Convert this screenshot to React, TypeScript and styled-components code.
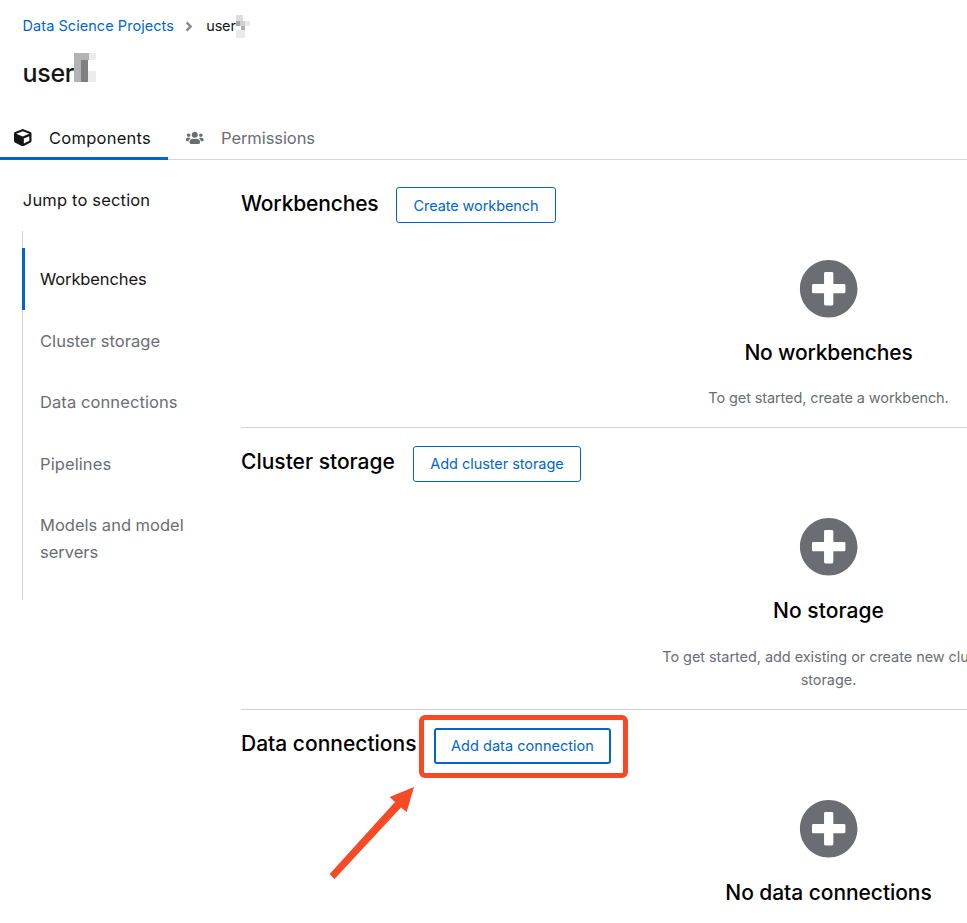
import React from "react";
import styled, { createGlobalStyle } from "styled-components";
import { FaAngleRight, FaCube, FaPlusCircle, FaUsers } from "react-icons/fa";

const blue = "#0066cc";
const gray = "#6a6e73";
const line = "#d2d2d2";
const marker = "#f64a27";

const GlobalStyle = createGlobalStyle`
  body { margin: 0; background: #fff; }
  *, *::before, *::after { box-sizing: border-box; }
  h1, h2, h3, p, ul { margin: 0; padding: 0; }
`;

const Page = styled.div`
  width: 967px;
  height: 923px;
  overflow: hidden;
  background: #fff;
  color: #151515;
  font-family: "Inter", "Open Sans", sans-serif;
`;

const PageHeader = styled.header`
  display: flow-root;
`;

const Breadcrumb = styled.nav`
  display: flex;
  align-items: center;
  height: 24px;
  margin-top: 14px;
  padding-left: 22.6px;
  font-size: 14.5px;
  line-height: 24px;
`;

const Crumb = styled.a`
  color: ${blue};
  letter-spacing: 0.05px;
`;

const CurrentCrumb = styled.span`
  letter-spacing: -0.2px;
`;

const Separator = styled(FaAngleRight)`
  width: 10px;
  height: 15px;
  margin: 0 12.4px 0 10px;
  color: #85888c;
`;

const Title = styled.h1`
  display: flex;
  align-items: flex-start;
  height: 40px;
  margin-top: 14px;
  padding-left: 22.6px;
  font-size: 25px;
  font-weight: 500;
  line-height: 43px;
  letter-spacing: -0.35px;
`;

const SmallMask = styled.svg`
  width: 14px;
  height: 23px;
`;

const LargeMask = styled.svg`
  width: 22px;
  height: 29px;
  margin-top: 1px;
`;

const Tabs = styled.div`
  display: flex;
  height: 45px;
  margin-top: 23px;
  box-shadow: inset 0 -1px ${line};
`;

const Tab = styled.div<{ $active?: boolean; $width: number; $ls: number }>`
  display: flex;
  align-items: center;
  gap: 17.5px;
  width: ${(p) => p.$width}px;
  padding: ${(p) => (p.$active ? "3px 0 0 14px" : "3px 0 0 18px")};
  border-bottom: ${(p) => (p.$active ? `3px solid ${blue}` : "3px solid transparent")};
  color: ${(p) => (p.$active ? "#151515" : gray)};
  font-size: 16.5px;
  letter-spacing: ${(p) => p.$ls}px;
  white-space: nowrap;

  svg { width: 17.5px; height: 17.5px; flex: none; }
`;

const Content = styled.div`
  display: flex;
`;

const Sidebar = styled.aside`
  flex: none;
  width: 241px;
  padding: 26.5px 0 0 22px;
  font-size: 16.5px;
  line-height: 26.6px;
`;

const SidebarTitle = styled.div`
  margin-bottom: 17.9px;
  padding-left: 0.8px;
  letter-spacing: 0.17px;
`;

const JumpList = styled.ul`
  list-style: none;
  width: 190px;
  height: 369px;
  padding-top: 17px;
  box-shadow: inset 1px 0 ${line};
`;

const JumpItem = styled.li<{ $active?: boolean; $ls: number }>`
  padding: 17.95px 0 17.05px 18px;
  box-shadow: ${(p) => (p.$active ? `inset 3px 0 ${blue}` : "none")};
  color: ${(p) => (p.$active ? "#151515" : gray)};
  letter-spacing: ${(p) => p.$ls}px;
`;

const Main = styled.main`
  flex: none;
  width: 1175px;
  padding-top: 9px;
`;

const Section = styled.section<{ $height: number }>`
  height: ${(p) => p.$height}px;
  padding-top: 18px;
  border-bottom: 1px solid ${line};
`;

const SectionHeader = styled.div`
  display: flex;
  gap: 18px;
  height: 36px;
`;

const Heading = styled.h2<{ $width: number; $ls: number; $line?: number }>`
  width: ${(p) => p.$width}px;
  color: #000;
  font-size: 21px;
  font-weight: 500;
  line-height: ${(p) => p.$line ?? 31}px;
  letter-spacing: ${(p) => p.$ls}px;
  white-space: nowrap;
`;

const Button = styled.button<{ $width: number; $focused?: boolean; $raised?: boolean; $ls: number }>`
  width: ${(p) => p.$width}px;
  height: 36px;
  padding: ${(p) => (p.$raised ? "0 0 2px" : "0")};
  border: ${(p) => (p.$focused ? 2 : 1)}px solid ${blue};
  border-radius: 3px;
  background: #fff;
  color: ${blue};
  font: 400 14.5px "Inter", "Open Sans", sans-serif;
  letter-spacing: ${(p) => p.$ls}px;
  white-space: nowrap;
`;

const Callout = styled.div`
  position: relative;
`;

const CalloutFrame = styled.div`
  position: absolute;
  left: -15px;
  top: -13px;
  width: 209px;
  height: 63px;
  border: 5px solid ${marker};
  border-radius: 6px;
`;

const CalloutArrow = styled.svg`
  position: absolute;
  left: -106px;
  top: 57px;
  width: 90px;
  height: 96px;
`;

const EmptyState = styled.div<{ $top: number }>`
  width: 355px;
  margin: ${(p) => p.$top}px auto 0;
  text-align: center;
`;

const EmptyIcon = styled(FaPlusCircle)`
  display: block;
  width: 59.4px;
  height: 59.4px;
  margin: -1px auto -1px;
  color: ${gray};
`;

const EmptyTitle = styled.h3<{ $ls: number }>`
  margin-top: 21.5px;
  color: #000;
  font-size: 21px;
  font-weight: 500;
  line-height: 27px;
  letter-spacing: ${(p) => p.$ls}px;
`;

const EmptyText = styled.p<{ $ls: number; $top?: number }>`
  margin-top: ${(p) => p.$top ?? 20.5}px;
  color: ${gray};
  font-size: 14.5px;
  line-height: 23px;
  letter-spacing: ${(p) => p.$ls}px;
`;

const jumpItems = [
  { label: "Workbenches", ls: -0.12, active: true },
  { label: "Cluster storage", ls: 0.06 },
  { label: "Data connections", ls: 0.09 },
  { label: "Pipelines", ls: 0.1 },
  { label: "Models and model servers", ls: 0 },
];

export default function App() {
  return (
    <>
      <GlobalStyle />
      <Page>
        <PageHeader>
          <Breadcrumb>
            <Crumb>Data Science Projects</Crumb>
            <Separator />
            <CurrentCrumb>user</CurrentCrumb>
            <SmallMask viewBox="0 0 14 23" shapeRendering="crispEdges">
              <path fill="#dcdcdc" d="M0 0h7v6H0z" />
              <path fill="#a6a6a6" d="M0 6h4v5H0z" />
              <path fill="#d0d0d0" d="M4 6h5v5H4z" />
              <path fill="#e9e9e9" d="M9 6h5v5H9zM0 15h9v8H0z" />
              <path fill="#b0b0b0" d="M5 11h4v4H5z" />
            </SmallMask>
          </Breadcrumb>
          <Title>
            user
            <LargeMask viewBox="0 0 22 29" shapeRendering="crispEdges">
              <path fill="#b3b3b3" d="M0 0h15v7H0zM0 7h7v22H0z" />
              <path fill="#808080" d="M7 7h7v22H7z" />
              <path fill="#ececec" d="M15 0h7v7h-7zM14 18h8v11h-8z" />
            </LargeMask>
          </Title>
          <Tabs>
            <Tab $active $width={168} $ls={0.25}><FaCube />Components</Tab>
            <Tab $width={170} $ls={-0.07}><FaUsers />Permissions</Tab>
          </Tabs>
        </PageHeader>
        <Content>
          <Sidebar>
            <SidebarTitle>Jump to section</SidebarTitle>
            <JumpList>
              {jumpItems.map((item) => (
                <JumpItem key={item.label} $active={item.active} $ls={item.ls}>{item.label}</JumpItem>
              ))}
            </JumpList>
          </Sidebar>
          <Main>
            <Section $height={259}>
              <SectionHeader>
                <Heading $width={137} $ls={-0.16} $line={33}>Workbenches</Heading>
                <Button $width={160} $ls={-0.09}>Create workbench</Button>
              </SectionHeader>
              <EmptyState $top={37}>
                <EmptyIcon />
                <EmptyTitle $ls={-0.16}>No workbenches</EmptyTitle>
                <EmptyText $ls={-0.11}>To get started, create a workbench.</EmptyText>
              </EmptyState>
            </Section>
            <Section $height={282}>
              <SectionHeader>
                <Heading $width={154} $ls={0}>Cluster storage</Heading>
                <Button $width={168} $raised $ls={-0.05}>Add cluster storage</Button>
              </SectionHeader>
              <EmptyState $top={36}>
                <EmptyIcon />
                <EmptyTitle $ls={0.05}>No storage</EmptyTitle>
                <EmptyText $ls={-0.06} $top={21.5}>To get started, add existing or create new cluster storage.</EmptyText>
              </EmptyState>
            </Section>
            <Section $height={282}>
              <SectionHeader>
                <Heading $width={175} $ls={0}>Data connections</Heading>
                <Callout>
                  <Button $width={177} $focused $raised $ls={0.03}>Add data connection</Button>
                  <CalloutFrame />
                  <CalloutArrow viewBox="0 0 90 96">
                    <path fill={marker} d="M86 2 78.7 27 73 22.5 6.5 94 1.7 89 67 17 61.7 12z" />
                  </CalloutArrow>
                </Callout>
              </SectionHeader>
              <EmptyState $top={36}>
                <EmptyIcon />
                <EmptyTitle $ls={-0.06}>No data connections</EmptyTitle>
              </EmptyState>
            </Section>
          </Main>
        </Content>
      </Page>
    </>
  );
}
